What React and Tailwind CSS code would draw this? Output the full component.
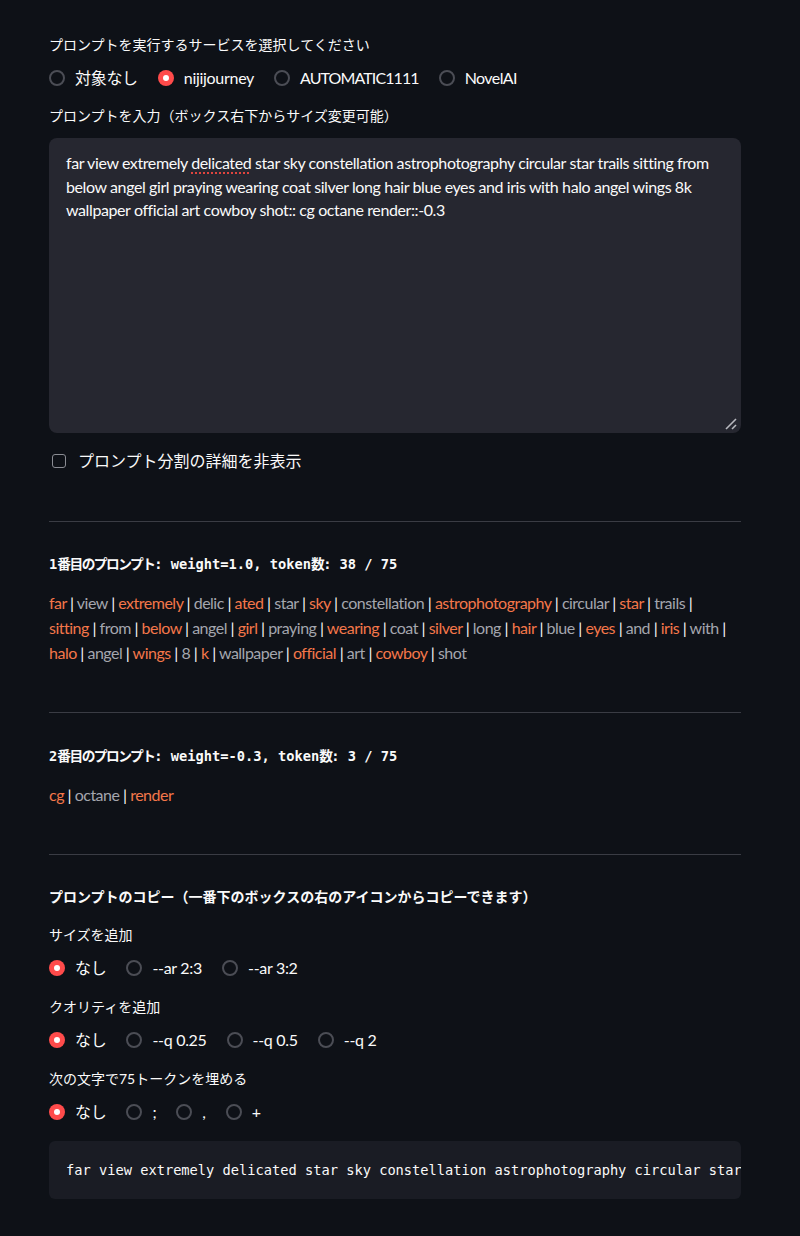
const sans = { fontFamily: 'Lato, "Noto Sans CJK JP", sans-serif' };

// caps-heavy labels run wide in Lato, pull them in a little
const tightLabels = { AUTOMATIC1111: "tracking-[-0.9px]", NovelAI: "tracking-[-0.6px]" };

function Radio({ checked }) {
    return checked ? (
        <span className="flex h-4 w-4 shrink-0 items-center justify-center rounded-full bg-[#ff4b4b]">
            <span className="h-1.5 w-1.5 rounded-full bg-white" />
        </span>
    ) : (
        <span className="h-4 w-4 shrink-0 rounded-full border-2 border-[#4b4d55] bg-[#0e1117]" />
    );
}

function RadioGroup({ options, selected }) {
    return (
        <div className="flex h-6 items-center gap-x-5">
            {options.map((opt) => (
                <label key={opt} className="flex items-center gap-2.5 text-[16px] tracking-[-0.3px] text-[#fafafa]">
                    <Radio checked={opt === selected} />
                    <span className={tightLabels[opt] || ""}>{opt}</span>
                </label>
            ))}
        </div>
    );
}

function Label({ children, className = "" }) {
    return <p className={`h-[22px] text-[14px] leading-[22px] text-[#fafafa] ${className}`}>{children}</p>;
}

function Divider({ className = "" }) {
    return <hr className={`border-0 border-t border-[#3a3c44] ${className}`} />;
}

// lines: array of word arrays; colours alternate across the whole prompt
function Tokens({ lines }) {
    let n = 0;
    return (
        <div className="text-[16px] leading-[25px] tracking-[-0.5px] text-[#fafafa]">
            {lines.map((words, li) => (
                <p key={li} className="whitespace-nowrap">
                    {words.map((w, i) => {
                        const idx = n++;
                        const last = li === lines.length - 1 && i === words.length - 1;
                        return (
                            <span key={i}>
                                <span className={idx % 2 === 0 ? "text-[#f4774a]" : "text-[#a4a6ae]"}>{w}</span>
                                {!last && " | "}
                            </span>
                        );
                    })}
                </p>
            ))}
        </div>
    );
}

const mono = { fontFamily: '"DejaVu Sans Mono", "Noto Sans CJK JP", monospace' };

// CJK parts of the mono headers sit in a narrower proportional face
function Jp({ children }) {
    return <span className="tracking-[-1.5px]">{children}</span>;
}

const firstTokens = [
    ["far", "view", "extremely", "delic", "ated", "star", "sky", "constellation", "astrophotography", "circular", "star", "trails"],
    ["sitting", "from", "below", "angel", "girl", "praying", "wearing", "coat", "silver", "long", "hair", "blue", "eyes", "and", "iris", "with"],
    ["halo", "angel", "wings", "8", "k", "wallpaper", "official", "art", "cowboy", "shot"],
];

const prompt = "far view extremely delicated star sky constellation astrophotography circular star trails sitting from below angel girl praying wearing coat silver long hair blue eyes and iris with halo angel wings 8k wallpaper official art cowboy shot:: cg octane render::-0.3";

export default function App() {
    return (
        <div className="min-h-screen bg-[#0e1117]" style={sans}>
            <div className="mx-[49px] pt-[34px] pb-[35px] w-[692px]">
                <Label>プロンプトを実行するサービスを選択してください</Label>
                <div className="mt-[10px]">
                    <RadioGroup options={["対象なし", "nijijourney", "AUTOMATIC1111", "NovelAI"]} selected="nijijourney" />
                </div>
                <Label className="mt-[15px]">プロンプトを入力（ボックス右下からサイズ変更可能）</Label>

                <div className="relative mt-[11px] h-[295px] rounded-lg bg-[#262730] px-[17px] pt-[13px]">
                    <p className="text-[16px] leading-[23.5px] tracking-[-0.4px] text-[#fafafa]">
                        far view extremely <span className="underline decoration-dotted decoration-[#e0443e] decoration-2 underline-offset-[3px]">delicated</span> star sky constellation astrophotography circular star trails sitting from below angel girl praying wearing coat silver long hair blue eyes and iris with halo angel wings 8k wallpaper official art cowboy shot:: cg octane render::-0.3
                    </p>
                    <svg className="absolute bottom-[2px] right-[3px]" width="14" height="14" viewBox="0 0 14 14">
                        <line x1="2" y1="12" x2="12" y2="2" stroke="#b8b9bf" strokeWidth="1.6" />
                        <line x1="8" y1="12" x2="12" y2="8" stroke="#b8b9bf" strokeWidth="1.6" />
                    </svg>
                </div>

                <label className="mt-4 flex h-6 items-center gap-3 text-[16px] text-[#fafafa]">
                    <span className="ml-[3px] h-[14px] w-[14px] rounded-[3px] border-[1.5px] border-[#8a8c93]" />
                    <span>プロンプト分割の詳細を非表示</span>
                </label>

                <Divider className="mt-[48px]" />

                <p className="mt-[31px] h-[22px] text-[13.7px] font-bold leading-[22px] text-[#fafafa]" style={mono}>
                    1<Jp>番目のプロンプト</Jp>: weight=1.0, token<Jp>数</Jp>: 38 / 75
                </p>
                <div className="mt-[15px]">
                    <Tokens lines={firstTokens} />
                </div>

                <Divider className="mt-[47px]" />

                <p className="mt-[32px] h-[22px] text-[13.7px] font-bold leading-[22px] text-[#fafafa]" style={mono}>
                    2<Jp>番目のプロンプト</Jp>: weight=-0.3, token<Jp>数</Jp>: 3 / 75
                </p>
                <div className="mt-[15px]">
                    <Tokens lines={[["cg", "octane", "render"]]} />
                </div>

                <Divider className="mt-[47px]" />

                <Label className="mt-[31px] font-bold">プロンプトのコピー（一番下のボックスの右のアイコンからコピーできます）</Label>
                <Label className="mt-4">サイズを追加</Label>
                <div className="mt-[10px]">
                    <RadioGroup options={["なし", "--ar 2:3", "--ar 3:2"]} selected="なし" />
                </div>
                <Label className="mt-4">クオリティを追加</Label>
                <div className="mt-[10px]">
                    <RadioGroup options={["なし", "--q 0.25", "--q 0.5", "--q 2"]} selected="なし" />
                </div>
                <Label className="mt-4">次の文字で75トークンを埋める</Label>
                <div className="mt-[10px]">
                    <RadioGroup options={["なし", ";", ",", "+"]} selected="なし" />
                </div>

                <div className="mt-[17px] flex h-[58px] items-center overflow-hidden rounded-md bg-[#1a1c24] pl-[17px]">
                    <pre className="whitespace-pre text-[13.7px] text-[#fafafa]" style={mono}>{prompt}</pre>
                </div>
            </div>
        </div>
    );
}
